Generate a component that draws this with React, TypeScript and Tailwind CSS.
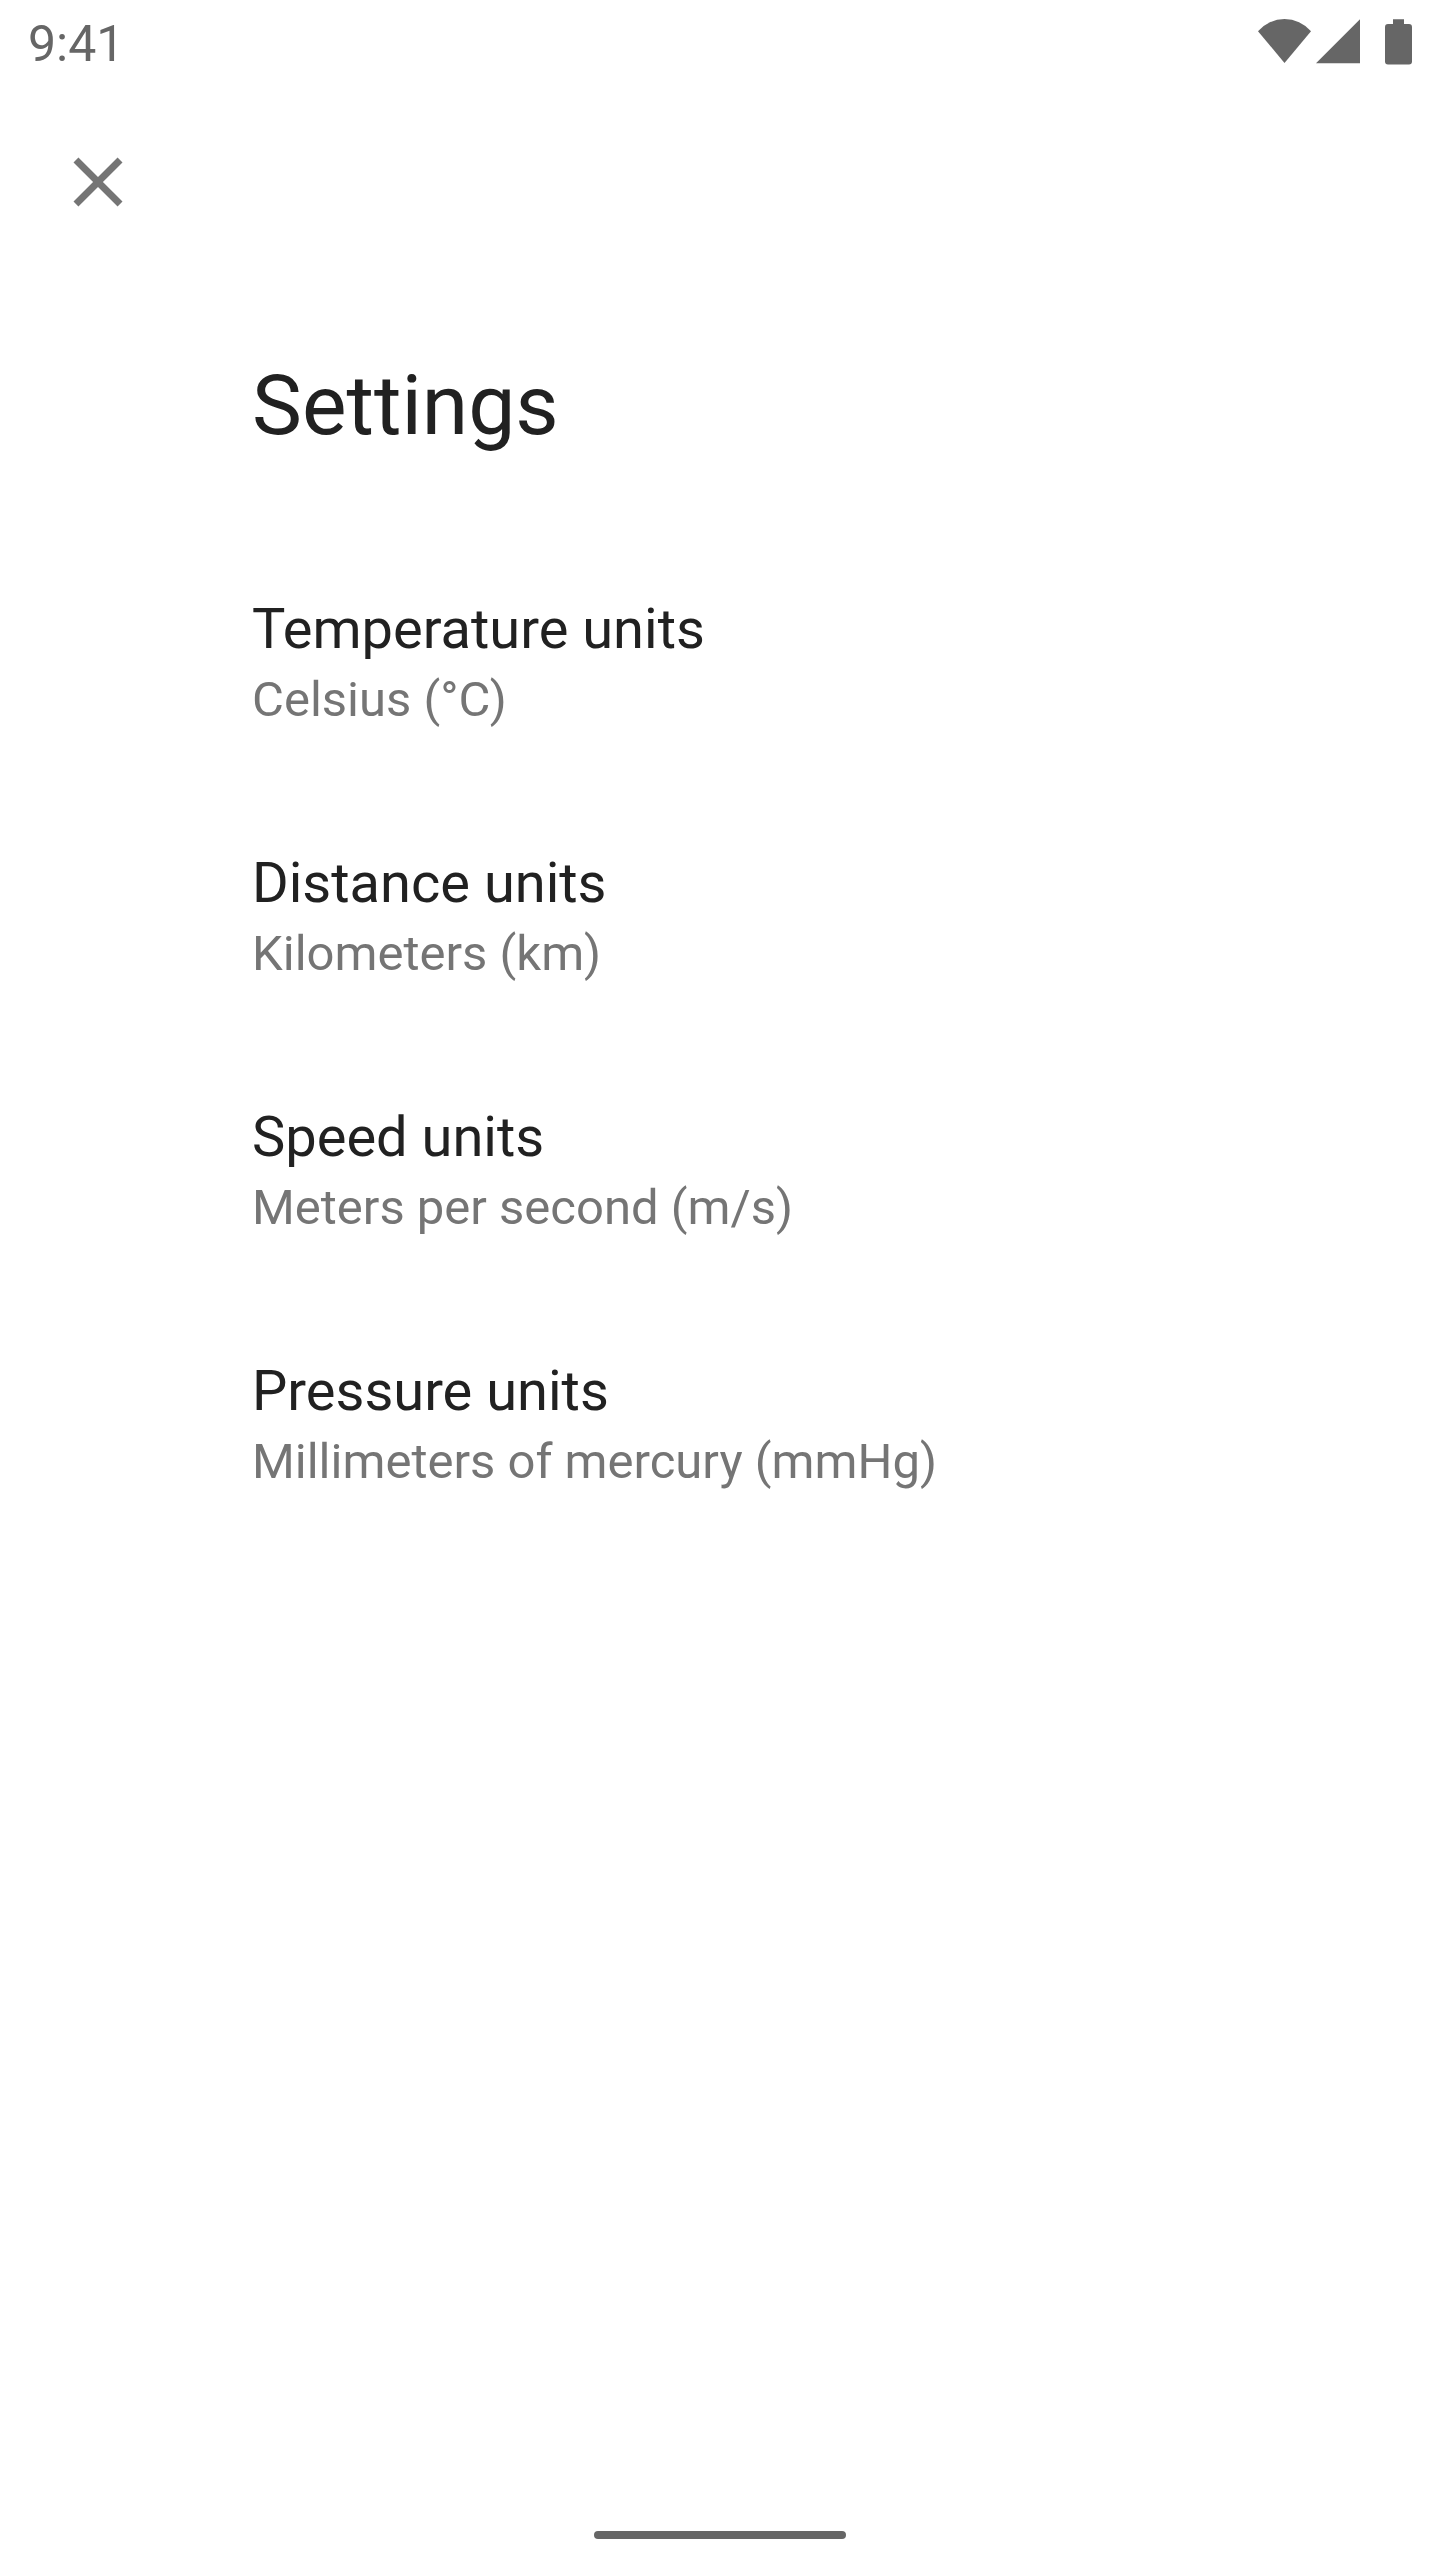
const units = [
  { label: "Temperature units", value: "Celsius (°C)" },
  { label: "Distance units", value: "Kilometers (km)" },
  { label: "Speed units", value: "Meters per second (m/s)" },
  { label: "Pressure units", value: "Millimeters of mercury (mmHg)" },
];

function StatusBar() {
  return (
    <div className="flex h-[84px] items-center justify-between px-7 text-[#666666]">
      <span className="pt-1 text-[50px] leading-[60px]">9:41</span>
      <div className="flex items-center" aria-hidden="true">
        <svg className="h-[46px] w-[53px]" viewBox="0 0 53 46" fill="currentColor">
          <path d="M26.5 44 0 12.2A35 35 0 0 1 53 12.2Z" />
        </svg>
        <svg className="ml-[5px] h-[46px] w-11" viewBox="0 0 44 46" fill="currentColor">
          <path d="M44 .3v44H0Z" />
        </svg>
        <svg className="ml-[25px] h-[46px] w-[27px]" viewBox="0 0 27 46" fill="currentColor">
          <path d="M8 .3h11V5h5a3 3 0 0 1 3 3v34.6a3 3 0 0 1-3 3H3a3 3 0 0 1-3-3V8a3 3 0 0 1 3-3h5Z" />
        </svg>
      </div>
    </div>
  );
}

export default function App() {
  return (
    <div className="flex min-h-screen flex-col bg-white font-['Roboto',sans-serif] text-[#212121]">
      <StatusBar />
      <header className="flex px-14 pt-14">
        <button type="button" aria-label="Close" className="text-[#757575]">
          <svg className="block h-[84px] w-[84px]" viewBox="0 0 24 24" fill="currentColor">
            <path d="M19 6.41 17.59 5 12 10.59 6.41 5 5 6.41 10.59 12 5 17.59 6.41 19 12 13.41 17.59 19 19 17.59 13.41 12z" />
          </svg>
        </button>
      </header>
      <main className="flex-1 pl-[252px] pt-[133px]">
        <h1 className="text-[84px] leading-[98px]">Settings</h1>
        <ul className="mt-[138px] flex flex-col gap-28">
          {units.map((unit) => (
            <li key={unit.label}>
              <button type="button" className="block w-full text-left">
                <span className="block text-[56px] leading-[72px]">{unit.label}</span>
                <span className="block text-[49px] leading-[70px] text-[#757575]">{unit.value}</span>
              </button>
            </li>
          ))}
        </ul>
      </main>
      <div className="mx-auto mb-[21px] h-2 w-[252px] rounded-full bg-[#666666]" />
    </div>
  );
}
